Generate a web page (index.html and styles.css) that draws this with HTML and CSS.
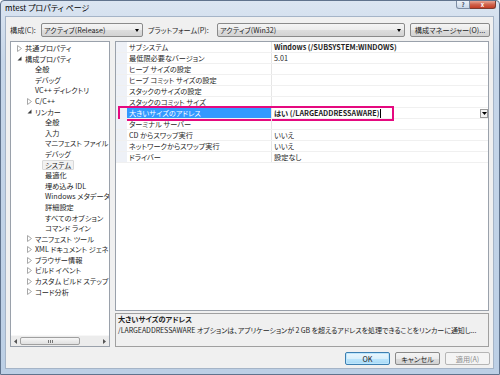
FILE: index.html
```html
<!DOCTYPE html>
<html>
<head>
    <meta charset="utf-8">
    <title>mtest プロパティ ページ</title>
    <link rel="stylesheet" href="styles.css">
</head>
<body>
<div class="window">
    <div class="titlebar">
        <span class="title">mtest プロパティ ページ</span>
        <div class="caption-buttons">
            <span class="cap-help">?</span>
            <span class="cap-close">x</span>
        </div>
    </div>

    <div class="client">
        <div class="toolbar">
            <span class="label label-config">構成(C):</span>
            <div class="combo combo-config">
                <span>アクティブ(Release)</span>
                <span class="combo-arrow"></span>
            </div>
            <span class="label label-platform">プラットフォーム(P):</span>
            <div class="combo combo-platform">
                <span>アクティブ(Win32)</span>
                <span class="combo-arrow"></span>
            </div>
            <div class="btn btn-manager">構成マネージャー(O)...</div>
        </div>

        <div class="main">
            <!-- 左のツリー -->
            <div class="tree">
                <div class="tree-list">
                    <div class="tree-item lv0"><span class="twisty"><svg width="5" height="7"><path d="M0.5 0.5 L4.5 3.5 L0.5 6.5 Z" fill="none" stroke="#a8a8a8"/></svg></span><span class="text">共通プロパティ</span></div>
                    <div class="tree-item lv0"><span class="twisty"><svg width="5" height="5"><path d="M4.5 0.5 L4.5 4.5 L0.5 4.5 Z" fill="#3a3a3a"/></svg></span><span class="text">構成プロパティ</span></div>
                    <div class="tree-item lv1"><span class="twisty"></span><span class="text">全般</span></div>
                    <div class="tree-item lv1"><span class="twisty"></span><span class="text">デバッグ</span></div>
                    <div class="tree-item lv1"><span class="twisty"></span><span class="text">VC++ ディレクトリ</span></div>
                    <div class="tree-item lv1"><span class="twisty"><svg width="5" height="7"><path d="M0.5 0.5 L4.5 3.5 L0.5 6.5 Z" fill="none" stroke="#a8a8a8"/></svg></span><span class="text">C/C++</span></div>
                    <div class="tree-item lv1"><span class="twisty"><svg width="5" height="5"><path d="M4.5 0.5 L4.5 4.5 L0.5 4.5 Z" fill="#3a3a3a"/></svg></span><span class="text">リンカー</span></div>
                    <div class="tree-item lv2"><span class="twisty"></span><span class="text">全般</span></div>
                    <div class="tree-item lv2"><span class="twisty"></span><span class="text">入力</span></div>
                    <div class="tree-item lv2"><span class="twisty"></span><span class="text">マニフェスト ファイル</span></div>
                    <div class="tree-item lv2"><span class="twisty"></span><span class="text">デバッグ</span></div>
                    <div class="tree-item lv2"><span class="twisty"></span><span class="text selected">システム</span></div>
                    <div class="tree-item lv2"><span class="twisty"></span><span class="text">最適化</span></div>
                    <div class="tree-item lv2"><span class="twisty"></span><span class="text">埋め込み IDL</span></div>
                    <div class="tree-item lv2"><span class="twisty"></span><span class="text">Windows メタデータ</span></div>
                    <div class="tree-item lv2"><span class="twisty"></span><span class="text">詳細設定</span></div>
                    <div class="tree-item lv2"><span class="twisty"></span><span class="text">すべてのオプション</span></div>
                    <div class="tree-item lv2"><span class="twisty"></span><span class="text">コマンド ライン</span></div>
                    <div class="tree-item lv1"><span class="twisty"><svg width="5" height="7"><path d="M0.5 0.5 L4.5 3.5 L0.5 6.5 Z" fill="none" stroke="#a8a8a8"/></svg></span><span class="text">マニフェスト ツール</span></div>
                    <div class="tree-item lv1"><span class="twisty"><svg width="5" height="7"><path d="M0.5 0.5 L4.5 3.5 L0.5 6.5 Z" fill="none" stroke="#a8a8a8"/></svg></span><span class="text">XML ドキュメント ジェネ</span></div>
                    <div class="tree-item lv1"><span class="twisty"><svg width="5" height="7"><path d="M0.5 0.5 L4.5 3.5 L0.5 6.5 Z" fill="none" stroke="#a8a8a8"/></svg></span><span class="text">ブラウザー情報</span></div>
                    <div class="tree-item lv1"><span class="twisty"><svg width="5" height="7"><path d="M0.5 0.5 L4.5 3.5 L0.5 6.5 Z" fill="none" stroke="#a8a8a8"/></svg></span><span class="text">ビルド イベント</span></div>
                    <div class="tree-item lv1"><span class="twisty"><svg width="5" height="7"><path d="M0.5 0.5 L4.5 3.5 L0.5 6.5 Z" fill="none" stroke="#a8a8a8"/></svg></span><span class="text">カスタム ビルド ステップ</span></div>
                    <div class="tree-item lv1"><span class="twisty"><svg width="5" height="7"><path d="M0.5 0.5 L4.5 3.5 L0.5 6.5 Z" fill="none" stroke="#a8a8a8"/></svg></span><span class="text">コード分析</span></div>
                </div>
                <div class="hscroll">
                    <span class="sb-arrow"><svg width="3" height="5"><path d="M3 0 L0 2.5 L3 5 Z" fill="#555"/></svg></span>
                    <div class="sb-track">
                        <div class="sb-thumb"><span class="grip"></span></div>
                    </div>
                    <span class="sb-arrow"><svg width="3" height="5"><path d="M0 0 L3 2.5 L0 5 Z" fill="#555"/></svg></span>
                </div>
            </div>

            <div class="right-pane">
                <!-- プロパティグリッド -->
                <div class="grid">
                    <div class="row"><span class="gutter"></span><span class="name">サブシステム</span><span class="value bold">Windows (/SUBSYSTEM:WINDOWS)</span></div>
                    <div class="row"><span class="gutter"></span><span class="name">最低限必要なバージョン</span><span class="value">5.01</span></div>
                    <div class="row"><span class="gutter"></span><span class="name">ヒープ サイズの設定</span><span class="value"></span></div>
                    <div class="row"><span class="gutter"></span><span class="name">ヒープ コミット サイズの設定</span><span class="value"></span></div>
                    <div class="row"><span class="gutter"></span><span class="name">スタックのサイズの設定</span><span class="value"></span></div>
                    <div class="row"><span class="gutter"></span><span class="name">スタックのコミット サイズ</span><span class="value"></span></div>
                    <div class="row row-selected">
                        <span class="gutter"></span>
                        <span class="name">大きいサイズのアドレス</span>
                        <span class="value bold">はい (/LARGEADDRESSAWARE)<span class="caret"></span><span class="drop-btn"><svg width="5" height="3"><path d="M0 0 L5 0 L2.5 3 Z" fill="#000"/></svg></span></span>
                        <span class="mark-box"></span>
                    </div>
                    <div class="row"><span class="gutter"></span><span class="name">ターミナル サーバー</span><span class="value"></span></div>
                    <div class="row"><span class="gutter"></span><span class="name">CD からスワップ実行</span><span class="value">いいえ</span></div>
                    <div class="row"><span class="gutter"></span><span class="name">ネットワークからスワップ実行</span><span class="value">いいえ</span></div>
                    <div class="row"><span class="gutter"></span><span class="name">ドライバー</span><span class="value">設定なし</span></div>
                </div>
                <div class="desc">
                    <div class="desc-title">大きいサイズのアドレス</div>
                    <div class="desc-text">/LARGEADDRESSAWARE オプションは、アプリケーションが 2 GB を超えるアドレスを処理できることをリンカーに通知し...</div>
                </div>
            </div>
        </div>

        <div class="footer">
            <div class="btn btn-ok">OK</div>
            <div class="btn">キャンセル</div>
            <div class="btn btn-disabled">適用(A)</div>
        </div>
    </div>
</div>
</body>
</html>
```

FILE: styles.css
```css
body {
    margin: 0;
    font-family: "Noto Sans CJK JP", sans-serif;
    font-size: 7.2px;
    font-feature-settings: "palt";
    color: #1e1e1e;
    background: #fff;
}

.window {
    width: 500px;
    height: 375px;
    box-sizing: border-box;
    display: flex;
    flex-direction: column;
    background: linear-gradient(to bottom, #dbe5f1, #c6d6e9 60px, #bccfe5);
    border: 1px solid #60738d;
    border-radius: 4px 4px 0 0;
}

.titlebar {
    height: 15px;
    display: flex;
    align-items: flex-start;
    justify-content: space-between;
}

.title {
    margin-left: 4px;
    margin-top: 2px;
    font-size: 8px;
    line-height: 10px;
    color: #000;
}

.caption-buttons {
    display: flex;
    margin-right: 3px;
}

.cap-help,
.cap-close {
    height: 8px;
    font-size: 6px;
    line-height: 7px;
    text-align: center;
    font-weight: bold;
    box-sizing: border-box;
}

.cap-help {
    width: 14px;
    color: #3a4a60;
    background: linear-gradient(to bottom, #edf2f8, #c9d7e8);
    border: 1px solid #7d8da4;
    border-top: none;
    border-radius: 0 0 0 3px;
}

.cap-close {
    width: 26px;
    color: #fff;
    background: linear-gradient(to bottom, #e9a695, #d0634d 50%, #c43d26);
    border: 1px solid #7c3b30;
    border-top: none;
    border-left: none;
    border-radius: 0 0 3px 0;
}

.client {
    flex: 1;
    margin: 0 5px 5px 4px;
    background: #f0f0f0;
    border: 1px solid #a5b4c7;
    display: flex;
    flex-direction: column;
}

/* 上段の構成/プラットフォーム */
.toolbar {
    display: flex;
    align-items: center;
    height: 14px;
    margin-top: 6px;
    padding-left: 4px;
}

.label {
    white-space: nowrap;
}

.label-config {
    width: 31px;
}

.label-platform {
    width: 69px;
    margin-left: 5px;
}

.combo {
    height: 14px;
    flex: none;
    box-sizing: border-box;
    display: flex;
    align-items: center;
    justify-content: space-between;
    padding: 0 3px 0 2px;
    border: 1px solid #8a8a8a;
    border-radius: 2px;
    background: linear-gradient(to bottom, #f4f4f4, #ebebeb 50%, #dddddd 50%, #d3d3d3);
    white-space: nowrap;
}

.combo-config {
    width: 102px;
}

.combo-platform {
    width: 188px;
}

.combo-arrow {
    width: 0;
    height: 0;
    border-left: 2.5px solid transparent;
    border-right: 2.5px solid transparent;
    border-top: 3px solid #000;
}

.btn {
    height: 13px;
    width: 45px;
    flex: none;
    box-sizing: border-box;
    display: flex;
    align-items: center;
    justify-content: center;
    border: 1px solid #8a8a8a;
    border-radius: 2px;
    background: linear-gradient(to bottom, #f4f4f4, #ebebeb 50%, #dddddd 50%, #d3d3d3);
    white-space: nowrap;
}

.btn-manager {
    width: 80px;
    height: 14px;
    margin-left: 5px;
}

.main {
    flex: 1;
    display: flex;
    gap: 5px;
    margin-top: 4px;
    padding: 0 4px;
}

/* ツリー */
.tree {
    width: 100px;
    flex: none;
    box-sizing: border-box;
    background: #fff;
    border: 1px solid #9aa1ab;
    display: flex;
    flex-direction: column;
    overflow: hidden;
}

.tree-list {
    flex: 1;
    padding-top: 1px;
    overflow: hidden;
}

.tree-item {
    display: flex;
    align-items: center;
    height: 10.6px;
    line-height: 10.6px;
    white-space: nowrap;
}

.tree-item.lv0 {
    padding-left: 4px;
}

.tree-item.lv1 {
    padding-left: 14px;
}

.tree-item.lv2 {
    padding-left: 24px;
}

.twisty {
    width: 9px;
    flex: none;
    display: flex;
    align-items: center;
    justify-content: flex-start;
    padding-left: 2px;
    box-sizing: border-box;
}

.twisty svg {
    display: block;
}

.tree-item .text {
    padding: 0 1px;
}

.tree-item .selected {
    background: #f2f2f2;
    border: 1px solid #d9d9d9;
    border-radius: 1px;
    line-height: 8.6px;
    padding: 0 2px;
    margin-left: -2px;
}

.hscroll {
    height: 10px;
    display: flex;
    align-items: center;
    background: #ececec;
    border-top: 1px solid #f7f7f7;
}

.sb-arrow {
    width: 9px;
    height: 10px;
    display: flex;
    align-items: center;
    justify-content: center;
}

.sb-arrow svg {
    display: block;
}

.sb-track {
    flex: 1;
    height: 10px;
    display: flex;
    align-items: center;
}

.sb-thumb {
    width: 60px;
    height: 8px;
    box-sizing: border-box;
    border: 1px solid #a0a0a0;
    border-radius: 2px;
    background: linear-gradient(to bottom, #f6f6f6, #e0e0e0);
    display: flex;
    align-items: center;
    justify-content: center;
}

.grip {
    width: 5px;
    height: 3px;
    background: repeating-linear-gradient(to right, #777 0 1px, transparent 1px 2px);
}

.right-pane {
    flex: 1;
    min-width: 0;
    display: flex;
    flex-direction: column;
}

/* プロパティグリッド */
.grid {
    flex: 1;
    background: #fff;
    border: 1px solid #9aa1ab;
}

.row {
    position: relative;
    height: 11px;
    box-sizing: border-box;
    display: grid;
    grid-template-columns: 11px 145px 1fr;
    border-bottom: 1px solid #f0f0f0;
    line-height: 10px;
    white-space: nowrap;
}

.gutter {
    background: #eef1f7;
}

.name {
    padding-left: 2px;
    border-right: 1px solid #e6e6e6;
    overflow: hidden;
}

.value {
    padding-left: 2px;
    display: flex;
    align-items: center;
}

.bold {
    font-weight: bold;
}

.row-selected .name {
    background: #3399ff;
    color: #fff;
}

.caret {
    width: 1px;
    height: 9px;
    margin-left: 1px;
    background: #000;
}

.drop-btn {
    margin-left: auto;
    width: 8px;
    height: 9px;
    box-sizing: border-box;
    border: 1px solid #9a9a9a;
    background: #f3f3f3;
    display: flex;
    align-items: center;
    justify-content: center;
}

.drop-btn svg {
    display: block;
}

/* 赤い囲み */
.mark-box {
    position: absolute;
    left: 2px;
    top: -2px;
    width: 276px;
    height: 15px;
    box-sizing: border-box;
    border: 2px solid #e5097f;
}

.desc {
    height: 34px;
    margin-top: 2px;
    box-sizing: border-box;
    border: 1px solid #a0a0a0;
    background: #f0f0f0;
    padding-left: 2px;
    line-height: 11px;
    white-space: nowrap;
    overflow: hidden;
}

.desc-title {
    font-weight: bold;
}

.desc-text {
    font-size: 7px;
    letter-spacing: -0.05px;
}

.footer {
    display: flex;
    justify-content: flex-end;
    gap: 5px;
    margin-top: 5px;
    margin-bottom: 3px;
    padding-right: 3px;
}

.btn-ok {
    border-color: #3c7fb1;
    box-shadow: inset 0 0 0 1px #bde6fd;
    background: linear-gradient(to bottom, #eaf6fd, #d9f0fc 50%, #bee6fd 50%, #a7d9f5);
}

.btn-disabled {
    color: #8d8d8d;
    border-color: #b5b5b5;
    background: #f4f4f4;
}
```
